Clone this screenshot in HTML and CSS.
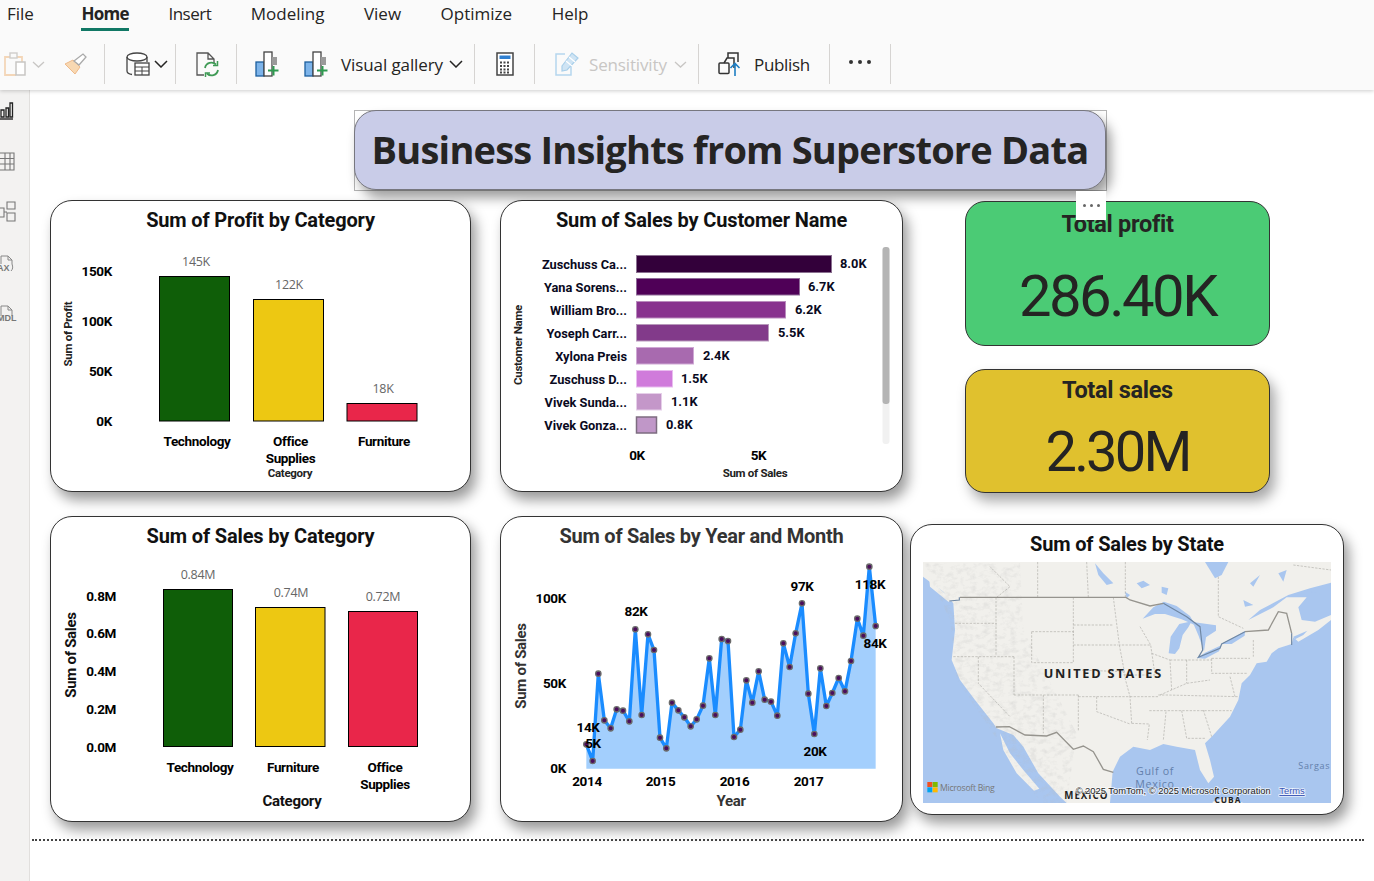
FILE: index.html
```html
<!DOCTYPE html>
<html lang="en">
<head>
<meta charset="utf-8">
<title>Business Insights from Superstore Data</title>
<link rel="stylesheet" href="styles.css">
</head>
<body>
<div class="app">
  <header class="ribbon">
    <nav class="tabs">
      <span class="tab tab-file">File</span>
      <span class="tab tab-active">Home</span>
      <span class="tab tab-insert">Insert</span>
      <span class="tab">Modeling</span>
      <span class="tab">View</span>
      <span class="tab">Optimize</span>
      <span class="tab">Help</span>
    </nav>
    <div class="toolbar">
      <div class="group group-a">
        <svg class="icon" width="26" height="26" viewBox="0 0 26 26"><path d="M14 24H3V6h17v5" fill="none" stroke="#f3d6b8" stroke-width="1.800"/><rect x="8" y="2" width="7" height="5" fill="#fafafa" stroke="#cfcdcb" stroke-width="1.400"/><rect x="14" y="11" width="9" height="13" fill="#fff" stroke="#c8c6c4" stroke-width="1.500"/></svg>
        <svg class="chev chev-off" width="13" height="7" viewBox="0 0 13 7"><path d="M1 1l5.500 5 5.500-5" fill="none" stroke="currentColor" stroke-width="1.300"/></svg>
        <svg class="icon painter" width="24" height="24" viewBox="0 0 24 24"><path d="M1 12l8-4 7 7-5 7z" fill="#f8d8b2" stroke="#eeb98a"/><path d="M10 9l9-7 3 3-7 8z" fill="#fff" stroke="#aaa" stroke-width="1.300"/></svg>
      </div>
      <div class="group group-b">
        <svg class="icon" width="24" height="26" viewBox="0 0 24 26"><ellipse cx="11" cy="6" rx="10" ry="4" fill="#fff" stroke="#444" stroke-width="1.300"/><path d="M1 6v14c0 2 2 3 5 3.500" fill="none" stroke="#444" stroke-width="1.300"/><path d="M21 6v5" stroke="#444" stroke-width="1.300"/><rect x="9" y="12" width="14" height="12" fill="#fff" stroke="#444" stroke-width="1.300"/><path d="M9 16h14M9 20h14M16 16v8" stroke="#444"/></svg>
        <svg class="chev" width="14" height="8" viewBox="0 0 14 8"><path d="M1 1l6 6 6-6" fill="none" stroke="currentColor" stroke-width="1.500"/></svg>
      </div>
      <div class="group group-c">
        <svg class="icon" width="24" height="26" viewBox="0 0 24 26"><path d="M8 24H1V2h11l6 6v4M12 2v6h6" fill="none" stroke="#555" stroke-width="1.300"/><path d="M9 17a6.500 6.500 0 0 1 11-3.500M22 19a6.500 6.500 0 0 1-11 3.500" fill="none" stroke="#3f9a55" stroke-width="1.800"/><path d="M21.500 10v4.500H17M9.500 26v-4h4.500" fill="none" stroke="#3f9a55" stroke-width="1.500"/></svg>
      </div>
      <div class="group group-d">
        <svg class="icon" width="24" height="26" viewBox="0 0 24 26"><rect x="1" y="11" width="8" height="14" fill="#7db4ea" stroke="#1c5f9e" stroke-width="1.300"/><rect x="9" y="1" width="8" height="24" fill="#fff" stroke="#444" stroke-width="1.300"/><rect x="17" y="6" width="5" height="8" fill="#9a9a9a"/><path d="M18.500 15v9.500M13 19.500h10.500" stroke="#2f9a50" stroke-width="2" fill="none"/></svg>
        <svg class="icon" width="24" height="26" viewBox="0 0 24 26"><rect x="1" y="11" width="8" height="14" fill="#7db4ea" stroke="#1c5f9e" stroke-width="1.300"/><rect x="9" y="1" width="8" height="24" fill="#fff" stroke="#444" stroke-width="1.300"/><rect x="17" y="6" width="5" height="8" fill="#9a9a9a"/><path d="M18.500 15v9.500M13 19.500h10.500" stroke="#2f9a50" stroke-width="2" fill="none"/></svg>
        <span class="btn-label">Visual gallery</span>
        <svg class="chev" width="14" height="8" viewBox="0 0 14 8"><path d="M1 1l6 6 6-6" fill="none" stroke="currentColor" stroke-width="1.500"/></svg>
      </div>
      <div class="group group-e">
        <svg class="icon" width="18" height="24" viewBox="0 0 18 24"><rect x="1" y="1" width="16" height="22" fill="#fff" stroke="#444" stroke-width="1.500"/><rect x="3.500" y="3.500" width="11" height="3.500" fill="#2f7fd0"/><path d="M4 10.500h10M4 14h10M4 17.500h10M4 20.500h10" stroke="#444" stroke-width="2" stroke-dasharray="2 1.500"/></svg>
      </div>
      <div class="group group-f">
        <svg class="icon" width="24" height="26" viewBox="0 0 24 26"><path d="M10 3H1v21h15V13" fill="none" stroke="#b5d6ee" stroke-width="1.500"/><path d="M7 15L17 2l6 5-11 12-5 1z" fill="#cfe4f4" stroke="#a9cfea" stroke-width="1.200"/><path d="M14 6l6 5M11 10l6 5" stroke="#fff" stroke-width="1.200"/></svg>
        <span class="btn-label btn-off">Sensitivity</span>
        <svg class="chev chev-off" width="13" height="7" viewBox="0 0 13 7"><path d="M1 1l5.500 5 5.500-5" fill="none" stroke="currentColor" stroke-width="1.300"/></svg>
      </div>
      <div class="group group-g">
        <svg class="icon" width="24" height="26" viewBox="0 0 24 26"><rect x="1" y="12" width="10" height="10.500" rx="1" fill="none" stroke="#333" stroke-width="1.500"/><path d="M6 12l3-5h7v10" fill="none" stroke="#333" stroke-width="1.500"/><path d="M10 7V2h10v9" fill="none" stroke="#333" stroke-width="1.500"/><path d="M17 25V13M12.500 17l4.500-4.500 4.500 4.500" fill="none" stroke="#1f7fc4" stroke-width="1.600"/></svg>
        <span class="btn-label">Publish</span>
      </div>
      <div class="group group-h">
        <span class="more"><i></i><i></i><i></i></span>
      </div>
    </div>
  </header>

  <div class="workspace">
    <aside class="rail">
      <svg class="rail-icon" width="14" height="20" viewBox="0 0 14 20"><path d="M0 18h13" stroke="#222" stroke-width="1.400"/><path d="M1 9h3v7H1zM6 7h2.500v9H6zM10 2h2.500v14H10z" fill="none" stroke="#222" stroke-width="1.300"/></svg>
      <svg class="rail-icon" width="15" height="20" viewBox="0 0 15 20"><path d="M0 2h14v17H0M0 7.500h14M0 13h14M5 2v17M10 2v17" fill="none" stroke="#777" stroke-width="1.100"/></svg>
      <svg class="rail-icon" width="16" height="24" viewBox="0 0 16 24"><path d="M7 1h8v7H7zM7 12h8v8H7zM0 7h4v9H0M4 11h3" fill="none" stroke="#777" stroke-width="1.100"/></svg>
      <span class="rail-doc"><svg width="14" height="18" viewBox="0 0 14 18"><path d="M1 9V1h7l4 4v4c1 3 1 5-1 7" fill="none" stroke="#888"/><path d="M8 1v4h4" fill="none" stroke="#888"/></svg><b>AX</b></span>
      <span class="rail-doc"><svg width="14" height="12" viewBox="0 0 14 12"><path d="M1 11V1h7l4 4v6" fill="none" stroke="#888"/><path d="M8 1v4h4" fill="none" stroke="#888"/></svg><b>MDL</b></span>
    </aside>

    <main class="canvas">
      <div class="selection">
        <h1 class="banner">Business Insights from Superstore Data</h1>
      </div>
      <div class="visual-menu"><i></i><i></i><i></i></div>

      <section class="card card-profit">
        <h2 class="card-title">Sum of Profit by Category</h2>
        <svg class="plot" width="421" height="292" viewBox="50 200 421 292">
          <g class="lbl-val">
            <text x="196" y="266">145K</text><text x="289" y="289">122K</text><text x="383" y="393">18K</text>
          </g>
          <rect class="bar bar-green" x="159.500" y="276.500" width="70" height="144.500"/>
          <rect class="bar bar-yellow" x="253.500" y="299.500" width="70" height="121.500"/>
          <rect class="bar bar-red" x="347" y="403.500" width="70" height="17.500"/>
          <g class="lbl-axis lbl-end">
            <text x="112" y="276">150K</text><text x="112" y="326">100K</text><text x="112" y="376">50K</text><text x="112" y="426">0K</text>
          </g>
          <g class="lbl-axis lbl-mid">
            <text x="197" y="446">Technology</text><text x="290.500" y="446">Office</text><text x="290.500" y="463">Supplies</text><text x="384" y="446">Furniture</text>
          </g>
          <text class="lbl-sm lbl-mid" x="290" y="477">Category</text>
          <text class="lbl-sm lbl-mid" transform="translate(72 334) rotate(-90)">Sum of Profit</text>
        </svg>
      </section>

      <section class="card card-customer">
        <h2 class="card-title">Sum of Sales by Customer Name</h2>
        <svg class="plot" width="403" height="292" viewBox="500 200 403 292">
          <rect x="636.500" y="255.500" width="195" height="17" fill="#33003a" stroke="#8a7090"/>
          <rect x="636.500" y="278.500" width="163" height="16.500" fill="#4f0057" stroke="#8f6a98"/>
          <rect x="636.500" y="301.500" width="149" height="16.500" fill="#88328e" stroke="#b98bbd"/>
          <rect x="636.500" y="324.500" width="132" height="16.500" fill="#823a8a" stroke="#b798bb"/>
          <rect x="636.500" y="347.500" width="57" height="16.500" fill="#a86aaf" stroke="#cfa8d4"/>
          <rect x="636.500" y="370.500" width="36" height="16.500" fill="#d07bdb" stroke="#e9bdef"/>
          <rect x="636.500" y="393.500" width="25" height="16.500" fill="#c497c9" stroke="#e6cfe9"/>
          <rect x="636.500" y="417" width="20" height="16" fill="#c097c8" stroke="#7d6c80" stroke-width="1.500"/>
          <g class="lbl-name lbl-end">
            <text x="627" y="269">Zuschuss Ca...</text><text x="627" y="292">Yana Sorens...</text><text x="627" y="315">William Bro...</text><text x="627" y="338">Yoseph Carr...</text><text x="627" y="361">Xylona Preis</text><text x="627" y="384">Zuschuss D...</text><text x="627" y="407">Vivek Sunda...</text><text x="627" y="430">Vivek Gonza...</text>
          </g>
          <g class="lbl-name">
            <text x="840" y="268">8.0K</text><text x="808" y="291">6.7K</text><text x="795" y="314">6.2K</text><text x="778" y="337">5.5K</text><text x="703" y="360">2.4K</text><text x="681" y="383">1.5K</text><text x="671" y="406">1.1K</text><text x="666" y="429">0.8K</text>
          </g>
          <rect x="882.500" y="247" width="7" height="197" rx="3" fill="#f1f1f1"/>
          <rect x="882.500" y="247" width="7" height="157" rx="3" fill="#b4b4b4"/>
          <g class="lbl-axis lbl-mid"><text x="637" y="460">0K</text><text x="758.500" y="460">5K</text></g>
          <text class="lbl-sm lbl-mid" x="755" y="477">Sum of Sales</text>
          <text class="lbl-sm lbl-mid" transform="translate(522 345) rotate(-90)">Customer Name</text>
        </svg>
      </section>

      <section class="kpi kpi-profit">
        <h2 class="kpi-title">Total profit</h2>
        <p class="kpi-value">286.40K</p>
      </section>
      <section class="kpi kpi-sales">
        <h2 class="kpi-title">Total sales</h2>
        <p class="kpi-value">2.30M</p>
      </section>

      <section class="card card-sales">
        <h2 class="card-title">Sum of Sales by Category</h2>
        <svg class="plot" width="421" height="306" viewBox="50 516 421 306">
          <g class="lbl-val">
            <text x="198" y="579">0.84M</text><text x="291" y="597">0.74M</text><text x="383" y="601">0.72M</text>
          </g>
          <rect class="bar bar-green" x="163.500" y="589.500" width="69" height="157"/>
          <rect class="bar bar-yellow" x="255.500" y="607.500" width="69.500" height="139"/>
          <rect class="bar bar-red" x="348.500" y="611.500" width="69" height="135"/>
          <g class="lbl-axis lbl-end">
            <text x="116" y="601">0.8M</text><text x="116" y="638">0.6M</text><text x="116" y="676">0.4M</text><text x="116" y="714">0.2M</text><text x="116" y="752">0.0M</text>
          </g>
          <g class="lbl-axis lbl-mid">
            <text x="200" y="772">Technology</text><text x="293" y="772">Furniture</text><text x="385" y="772">Office</text><text x="385" y="789">Supplies</text>
          </g>
          <text class="lbl-title lbl-mid" x="292" y="806">Category</text>
          <text class="lbl-title lbl-mid" transform="translate(76 655) rotate(-90)">Sum of Sales</text>
        </svg>
      </section>

      <section class="card card-trend">
        <h2 class="card-title card-title-soft">Sum of Sales by Year and Month</h2>
        <svg class="plot" width="403" height="306" viewBox="500 516 403 306">
          <defs>
            <marker id="dot" markerUnits="userSpaceOnUse" markerWidth="28" markerHeight="28" refX="14" refY="14" viewBox="0 0 28 28"><circle cx="14" cy="14" r="8" fill="#4b0d5c" stroke="#6b6b6b" stroke-width="4"/></marker>
          </defs>
          <g transform="translate(500 515) scale(.33333)">
            <polygon class="area" points="259,761 259,688 278,738 295,476 313,616 332,640 350,583 369,587 388,619 406,343 425,600 444,358 462,405 480,668 499,700 516,563 535,586 553,607 572,634 590,613 609,572 628,430 646,600 665,372 684,378 702,666 721,644 739,496 757,563 776,469 794,554 813,560 832,602 850,385 869,456 887,355 906,265 925,536 943,657 961,460 979,573 997,534 1016,489 1035,529 1053,438 1072,311 1090,362 1108,155 1127,333 1127,761"/>
            <polyline class="line" points="259,688 278,738 295,476 313,616 332,640 350,583 369,587 388,619 406,343 425,600 444,358 462,405 480,668 499,700 516,563 535,586 553,607 572,634 590,613 609,572 628,430 646,600 665,372 684,378 702,666 721,644 739,496 757,563 776,469 794,554 813,560 832,602 850,385 869,456 887,355 906,265 925,536 943,657 961,460 979,573 997,534 1016,489 1035,529 1053,438 1072,311 1090,362 1108,155 1127,333"/>
          </g>
          <g class="lbl-axis lbl-end">
            <text x="566" y="603">100K</text><text x="566" y="688">50K</text><text x="566" y="773">0K</text>
          </g>
          <g class="lbl-axis lbl-mid">
            <text x="587" y="786">2014</text><text x="660.500" y="786">2015</text><text x="734.500" y="786">2016</text><text x="808.500" y="786">2017</text>
            <text x="636" y="616">82K</text><text x="588" y="732">14K</text><text x="593" y="748">5K</text><text x="802" y="591">97K</text><text x="870" y="589">118K</text><text x="875" y="648">84K</text><text x="815" y="756">20K</text>
          </g>
          <text class="lbl-title lbl-soft lbl-mid" x="731" y="806">Year</text>
          <text class="lbl-title lbl-soft lbl-mid" transform="translate(526 666) rotate(-90)">Sum of Sales</text>
        </svg>
      </section>

      <section class="card card-map">
        <h2 class="card-title">Sum of Sales by State</h2>
        <svg class="map" width="408" height="241" viewBox="39 126 1224 723">
          <defs>
            <filter id="relief" x="0" y="0" width="100%" height="100%">
              <feTurbulence type="fractalNoise" baseFrequency="0.05 0.07" numOctaves="3" seed="4"/>
              <feColorMatrix values="0 0 0 0 .5  0 0 0 0 .5  0 0 0 0 .5  1.600 0 0 0 -.72"/>
              <feGaussianBlur stdDeviation="1.200"/>
            </filter>
            <clipPath id="west"><path d="M40 130H330L340 330 500 640 470 849H390L140 480 120 300Z"/></clipPath>
          </defs>
          <rect class="water" x="39" y="126" width="1224" height="723"/>
          <path class="land" d="M39 126H1263V188L1200 205 1135 225 1050 270 1015 300 1090 262 1130 232 1190 232 1165 262 1175 300 1215 305 1263 285V300L1225 330 1165 365 1150 352 1145 372 1105 385 1085 400 1070 425 1040 430 1020 465 995 490 985 540 960 590 905 650 885 670 900 720 912 770 895 790 870 750 855 690 800 680 760 672 720 690 670 680 630 710 608 755 600 849H470L450 830 385 760 340 680 310 645 297 640 260 625 250 610 195 540 150 480 125 420 135 330 130 250 100 215 39 170Z"/>
          <path class="land" d="M270 640L300 700 340 750 388 806 372 812 320 760 280 690Z"/>
          <path class="land" d="M58 180L110 225 140 240 115 245 60 200Z"/>
          <path class="land" d="M908 845L950 832 1000 849H908Z"/>
          <rect class="relief" x="39" y="126" width="520" height="723" clip-path="url(#west)" filter="url(#relief)"/>
          <g class="water">
            <path d="M698 296L730 262 762 245 800 258 840 288 856 316 815 298 765 282 735 282Z"/>
            <path d="M776 400L782 350 808 312 845 304 835 322 818 345 808 385 795 402Z"/>
            <path d="M848 306L918 316 918 332 888 352 882 394 866 348Z"/>
            <path d="M860 414L885 398 934 376 927 394 885 416Z"/>
            <path d="M933 372L975 350 1005 333 1004 347 965 372Z"/>
            <path d="M885 126H955L935 165 915 175Z"/>
            <path d="M555 130L580 160 610 190 590 195 565 165Z"/>
            <path d="M680 190L700 182 720 195 695 205ZM755 200L775 205 770 225 755 218ZM645 215L660 225 650 235Z"/>
            <path d="M1020 190L1050 165 1030 200ZM1105 160L1130 150 1120 185ZM1000 240L1030 255 1005 260ZM1190 210L1240 225 1200 215Z"/>
            <path d="M1150 350L1192 332 1180 345 1155 358Z"/>
          </g>
          <g class="states">
            <path d="M135 310H260M258 232V405M490 232V345M490 315H610M610 232L628 375M365 335H490V428H365ZM490 375H625M130 410H312M205 410V490L300 590M312 410V525M312 525H505M400 525V640M505 525V632M505 530H660M560 530V575L660 612M505 450L640 455 660 530 665 610M660 530H745M628 375L645 465H735L722 375H628M690 320L722 375M665 610L718 612 712 660M718 572H965M745 525L770 525 985 530M750 525L830 490 900 480M725 400L780 420 785 510M830 420V490M780 420H905M905 415H1020M905 415V460H1010M768 575L760 660M815 572L830 655H885M880 570L905 650M960 470L975 530M1030 360V410"/>
            <path d="M383 126V232M530 126L535 232M646 126V232M925 170V290L1000 325M1150 135L1263 150M260 232L300 200 240 140"/>
          </g>
          <path class="border" d="M150 232H648L660 240 720 258 760 250M1005 335L1075 330 1105 275 1130 280 1145 340"/>
          <path class="border" d="M258 621L298 620 345 645 410 648 440 637 490 688 520 678 550 695 580 748 610 757"/>
          <path class="border-water" d="M118 243L148 240V232M760 250L830 290 870 320 878 390 865 412 930 385 935 372 1005 335M1145 340V375"/>
          <text class="map-country" x="580" y="473">UNITED STATES</text>
          <text class="map-sea" x="735" y="764">Gulf of</text>
          <text class="map-sea" x="735" y="804">Mexico</text>
          <text class="map-sea map-sea-start" x="1165" y="746">Sargas</text>
          <text class="map-place" x="529" y="836">MEXICO</text>
          <text class="map-place map-place-sm" x="954" y="848">CUBA</text>
          <rect x="52" y="786" width="15" height="15" fill="#f25022"/><rect x="68" y="786" width="15" height="15" fill="#7fba00"/><rect x="52" y="802" width="15" height="15" fill="#00a4ef"/><rect x="68" y="802" width="15" height="15" fill="#ffb900"/>
          <text class="map-bing" x="90" y="812">Microsoft Bing</text>
          <text class="map-credit" x="497" y="822">© 2025 TomTom, © 2025 Microsoft Corporation</text>
          <text class="map-terms" x="1108" y="822">Terms</text>
        </svg>
      </section>

      <div class="page-edge"></div>
    </main>
  </div>
</div>
</body>
</html>
```
FILE: styles.css
```css
* { box-sizing: border-box; }
html, body { margin: 0; padding: 0; background: #fff; }
.app { width: 1374px; height: 881px; overflow: hidden; display: flex; flex-direction: column; font-family: "Open Sans", "Noto Sans", sans-serif; color: #252423; }

.ribbon { height: 90px; flex: none; background: #fafafa; box-shadow: 0 1px 4px rgba(0,0,0,.2); position: relative; z-index: 3; }
.tabs { height: 32px; display: flex; align-items: flex-start; gap: 39.500px; padding-left: 7px; }
.tab { font-size: 17px; line-height: 28px; height: 32px; color: #252423; }
.tab-file { margin-right: 8px; }
.tab-active { font-weight: 700; letter-spacing: -.7px; border-bottom: 3px solid #117865; padding-bottom: 1px; height: 31px; }
.tab-insert { letter-spacing: -.5px; }

.toolbar { height: 40px; margin-top: 12px; display: grid; grid-template-columns: 105px 71px 61px 238px 60px 164px 131px 61px; }
.group { display: flex; align-items: center; border-right: 1px solid #d6d4d2; height: 40px; }
.icon { flex: none; display: block; }
.chev { flex: none; color: #252423; display: block; }
.chev-off { color: #c8c6c4; }
.btn-label { font-size: 17px; letter-spacing: -.35px; white-space: nowrap; }
.btn-off { color: #c8c6c4; }

.group-a { padding-left: 2px; }
.group-a .chev { margin-left: 4px; }
.group-a .painter { margin-left: 19px; }
.group-b { padding-left: 21px; }
.group-b .chev { margin-left: 4px; }
.group-c { padding-left: 20px; }
.group-d { padding-left: 18px; }
.group-d .icon + .icon { margin-left: 25px; }
.group-d .btn-label { margin-left: 13px; letter-spacing: -.1px; }
.group-d .chev { margin-left: 6px; }
.group-e { padding-left: 21px; }
.group-f { padding-left: 20px; }
.group-f .btn-label { margin-left: 10px; letter-spacing: -.15px; }
.group-f .chev { margin-left: 7px; }
.group-g { padding-left: 19px; }
.group-g .btn-label { margin-left: 12px; }
.group-h { padding-left: 19px; }
.more { display: flex; gap: 5px; margin-top: -4px; }
.more i { width: 4px; height: 4px; border-radius: 50%; background: #333; display: block; }

.workspace { flex: 1; display: flex; min-height: 0; }
.rail { width: 30px; flex: none; background: #f3f2f1; border-right: 1px solid #e1dfdd; display: flex; flex-direction: column; padding-top: 11px; gap: 30px; overflow: hidden; }
.rail-icon { display: block; flex: none; }
.rail-doc { display: block; height: 20px; position: relative; }
.rail-doc svg { display: block; }
.rail-doc b { position: absolute; left: -3px; top: 8px; font: 700 9px "Liberation Sans", sans-serif; color: #777; }

.canvas { flex: 1; position: relative; background: #fff; }
.selection { position: absolute; left: 324px; top: 20px; width: 753px; height: 81px; border: 1px solid #b5b5b5; }
.banner { margin: -1px 0 0 -1px; width: calc(100% + 1px); height: calc(100% + 1px); display: flex; align-items: center; justify-content: center; padding-bottom: 3px; background: #c9cce8; border: 1px solid #77777f; border-radius: 22px; box-shadow: 5px 8px 12px rgba(0,0,0,.38); font-size: 38px; font-weight: 700; letter-spacing: -.8px; color: #252423; white-space: nowrap; }
.visual-menu { position: absolute; left: 1046px; top: 101px; width: 30px; height: 29px; background: #fff; display: flex; align-items: center; justify-content: center; gap: 4px; z-index: 2; }
.visual-menu i { width: 3px; height: 3px; border-radius: 50%; background: #666; display: block; }

.card { position: absolute; background: #fff; border: 1px solid #333; border-radius: 22px; box-shadow: 5px 8px 13px rgba(0,0,0,.4); overflow: hidden; }
.card-profit { left: 20px; top: 110px; width: 421px; height: 292px; }
.card-customer { left: 470px; top: 110px; width: 403px; height: 292px; }
.card-sales { left: 20px; top: 426px; width: 421px; height: 306px; }
.card-trend { left: 470px; top: 426px; width: 403px; height: 306px; }
.card-map { left: 880px; top: 434px; width: 434px; height: 291px; }
.card-title { margin: 7px 0 0; text-align: center; font: 700 20px/24px Roboto, sans-serif; letter-spacing: -.15px; color: #111; white-space: nowrap; }
.card-title-soft { color: #333; letter-spacing: -.25px; }
.plot { position: absolute; left: -1px; top: -1px; display: block; }
.map { position: absolute; left: 12px; top: 37px; display: block; }

.lbl-val text { font: 400 12.500px "Open Sans", sans-serif; fill: #666; text-anchor: middle; letter-spacing: -.3px; }
.lbl-axis text { font: 700 13.500px Roboto, sans-serif; fill: #000; letter-spacing: -.35px; }
.lbl-name text { font: 700 12.800px Roboto, sans-serif; fill: #0a0a1e; }
.lbl-sm { font: 700 11.500px Roboto, sans-serif; fill: #222; letter-spacing: -.3px; }
.lbl-title { font: 700 15px Roboto, sans-serif; fill: #111; letter-spacing: -.3px; }
.lbl-soft { fill: #333; }
.lbl-end, .lbl-end text { text-anchor: end; }
.lbl-mid, .lbl-mid text { text-anchor: middle; }
.bar { stroke: #000; stroke-width: 1; }
.bar-green { fill: #0f5e08; }
.bar-yellow { fill: #edc812; }
.bar-red { fill: #e9264a; }

.area { fill: #a3cffd; }
.line { fill: none; stroke: #1a8cff; stroke-width: 10; stroke-linejoin: round; marker-start: url(#dot); marker-mid: url(#dot); marker-end: url(#dot); }

.water { fill: #a9c6ef; }
.land { fill: #f1f0ec; }
.relief { opacity: .4; }
.states { fill: none; stroke: #aaa8a2; stroke-width: 1.800; stroke-dasharray: 7 4; }
.border { fill: none; stroke: #96948e; stroke-width: 4; }
.border-water { fill: none; stroke: #6f87a3; stroke-width: 3.500; }
.map-country { font: 700 38px "Open Sans", sans-serif; fill: #222; text-anchor: middle; letter-spacing: 5.500px; }
.map-sea { font: 400 32px "Open Sans", sans-serif; fill: #6380ab; text-anchor: middle; letter-spacing: 2px; }
.map-sea-start { text-anchor: start; font-size: 27px; }
.map-place { font: 700 29px "Open Sans", sans-serif; fill: #222; text-anchor: middle; letter-spacing: 3px; }
.map-place-sm { font-size: 25px; }
.map-bing { font: 400 26px "Open Sans", sans-serif; fill: #777; letter-spacing: -.8px; }
.map-credit { font: 400 28px "Liberation Sans", sans-serif; fill: #222; paint-order: stroke; stroke: rgba(255,255,255,.75); stroke-width: 5px; }
.map-terms { font: 400 28px "Liberation Sans", sans-serif; fill: #3a55b5; text-decoration: underline; paint-order: stroke; stroke: rgba(255,255,255,.75); stroke-width: 5px; }

.kpi { position: absolute; left: 935px; width: 305px; border: 1px solid #333; border-radius: 20px; display: flex; flex-direction: column; align-items: center; box-shadow: 5px 8px 13px rgba(0,0,0,.35); }
.kpi-profit { top: 111px; height: 145px; background: #4bcb75; box-shadow: none; }
.kpi-sales { top: 279px; height: 124px; background: #e0c12e; }
.kpi-title { margin: 8px 0 0; font: 700 23.500px/29px Roboto, sans-serif; color: #252423; letter-spacing: -.3px; white-space: nowrap; }
.kpi-value { margin: 0; font: 400 58px/68px Roboto, sans-serif; color: #252423; letter-spacing: -2.500px; }
.kpi-profit .kpi-value { margin-top: 23px; }
.kpi-sales .kpi-title { margin-top: 6px; }
.kpi-sales .kpi-value { margin-top: 13px; font-size: 56px; letter-spacing: -2.800px; }

.page-edge { position: absolute; left: 2px; top: 749px; width: 1332px; border-top: 2px dotted #444; }
```
